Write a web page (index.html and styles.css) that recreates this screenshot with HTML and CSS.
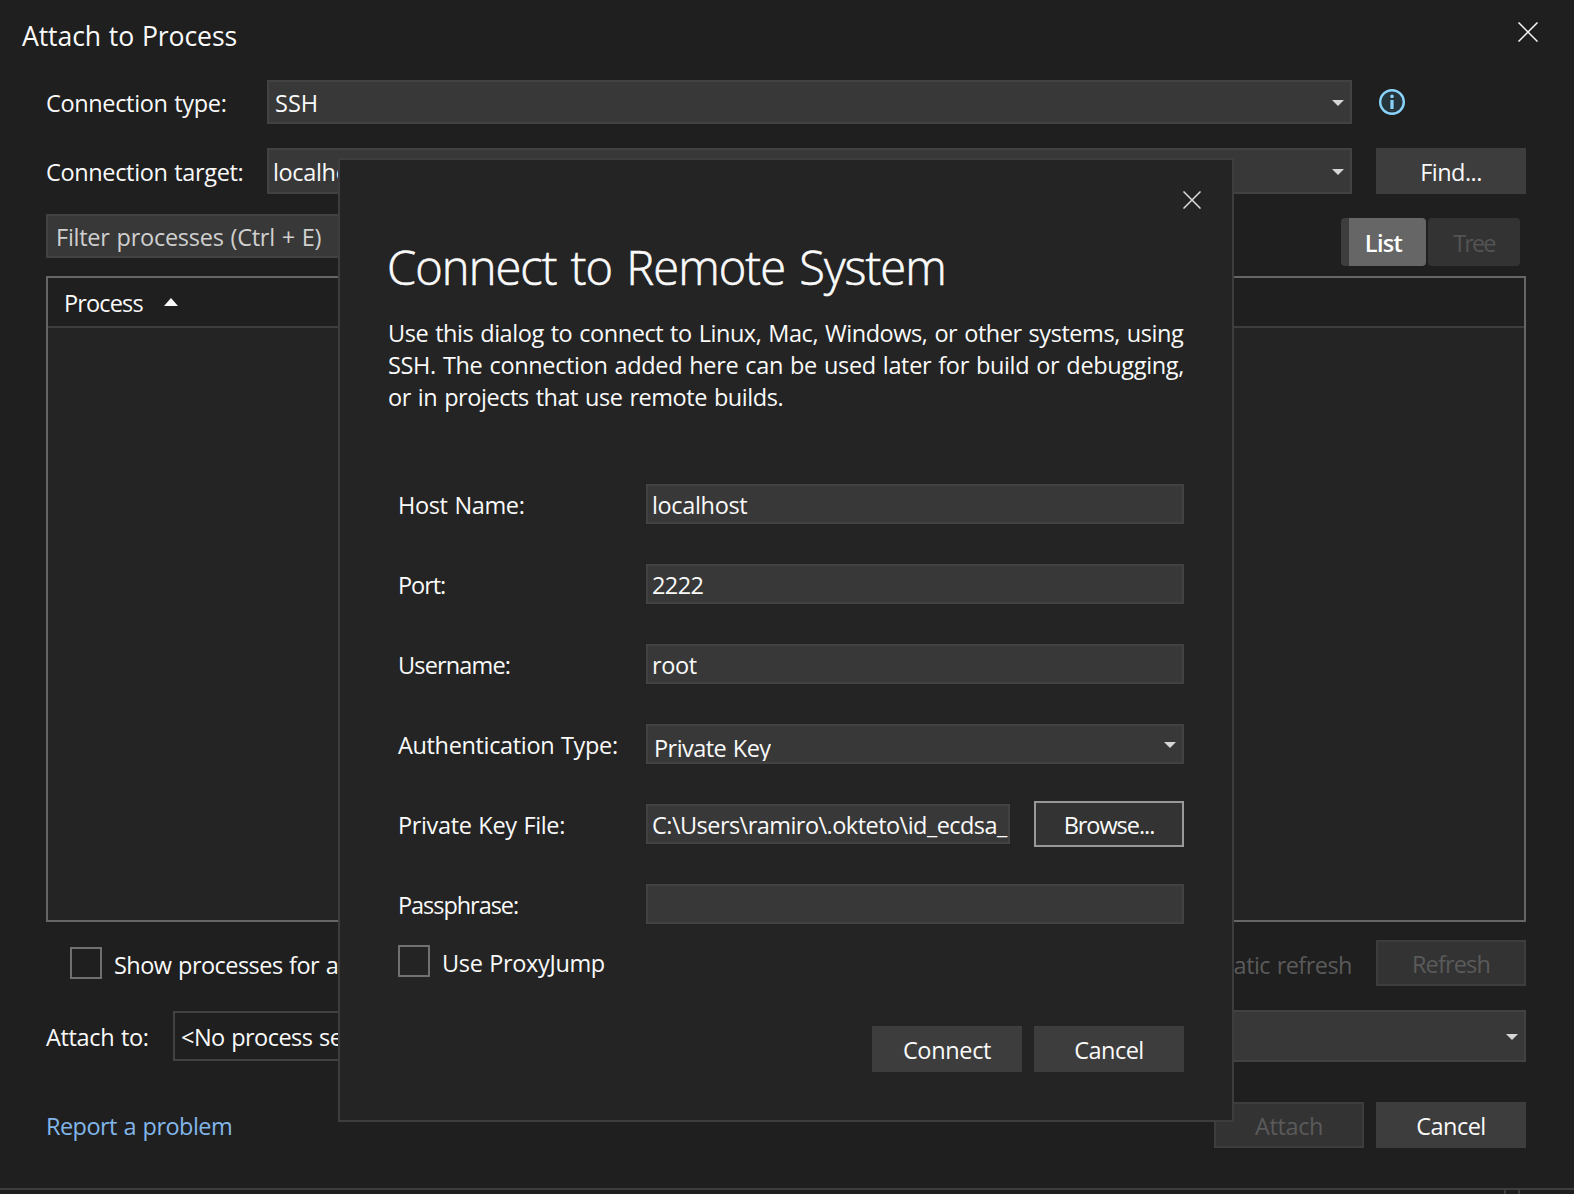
FILE: index.html
```html
<!DOCTYPE html>
<html lang="en">
<head>
<meta charset="utf-8">
<title>Attach to Process</title>
<link rel="stylesheet" href="styles.css">
</head>
<body>
<main class="window">
  <header class="titlebar">
    <h1 class="window-title">Attach to Process</h1>
    <svg class="close" width="20" height="20" viewBox="0 0 20 20"><path d="M.5.5l19 19M19.5.5l-19 19"/></svg>
  </header>

  <div class="row row-type">
    <span class="label side-label">Connection type:</span>
    <div class="field combo"><span class="ls-0">SSH</span><svg class="arrow" width="12" height="6" viewBox="0 0 12 6"><path d="M0 0h12l-6 6z"/></svg></div>
    <svg class="info" width="26" height="26" viewBox="0 0 26 26"><circle cx="13" cy="13" r="11.8"/><path class="dot" d="M13 5.6a1.8 1.8 0 1 1 0 3.6a1.8 1.8 0 1 1 0-3.6M11.4 11h3.2v9h-3.2z"/></svg>
  </div>

  <div class="row row-target">
    <span class="label side-label">Connection target:</span>
    <div class="field combo editable"><span>localhost</span><svg class="arrow" width="12" height="6" viewBox="0 0 12 6"><path d="M0 0h12l-6 6z"/></svg></div>
    <div class="button ls-tight">Find...</div>
  </div>

  <div class="row row-filter">
    <div class="field filter">Filter processes (Ctrl + E)</div>
    <div class="toggle">
      <div class="toggle-item active">List</div>
      <div class="toggle-item off">Tree</div>
    </div>
  </div>

  <section class="table">
    <div class="table-head"><span class="ls-tighter">Process</span><svg width="14" height="8" viewBox="0 0 14 8"><path d="M0 8h14L7 0z"/></svg></div>
  </section>

  <div class="row row-options">
    <div class="check"><i class="box"></i><span class="ls-tight">Show processes for all users</span></div>
    <div class="auto ls-tight">Automatic refresh</div>
    <div class="button disabled ls-tighter">Refresh</div>
  </div>

  <div class="row row-attach">
    <span class="label attach-label">Attach to:</span>
    <div class="selected ls-tight">&lt;No process selected&gt;</div>
    <div class="field combo"><svg class="arrow" width="12" height="6" viewBox="0 0 12 6"><path d="M0 0h12l-6 6z"/></svg></div>
  </div>

  <footer class="row row-footer">
    <a class="link ls-tight">Report a problem</a>
    <div class="button disabled attach">Attach</div>
    <div class="button ls-tight">Cancel</div>
  </footer>
  <div class="edge"><i></i></div>
</main>

<section class="dialog">
  <svg class="close dialog-close" width="18" height="18" viewBox="0 0 18 18"><path d="M.5.5l17 17M17.5.5l-17 17"/></svg>
  <h2 class="dialog-title">Connect to Remote System</h2>
  <p class="intro">Use this dialog to connect to Linux, Mac, Windows, or other systems, using<br><span class="line-two">SSH. The connection added here can be used later for build or debugging,</span><br>or in projects that use remote builds.</p>
  <div class="form">
    <div class="form-row"><span class="label">Host Name:</span><div class="field text">localhost</div></div>
    <div class="form-row"><span class="label ls-tightest">Port:</span><div class="field text ls-number">2222</div></div>
    <div class="form-row"><span class="label ls-tighter">Username:</span><div class="field text">root</div></div>
    <div class="form-row"><span class="label">Authentication Type:</span><div class="field text select"><span class="clip ls-tight">Private Key</span><svg class="arrow" width="12" height="6" viewBox="0 0 12 6"><path d="M0 0h12l-6 6z"/></svg></div></div>
    <div class="form-row"><span class="label">Private Key File:</span><div class="field text path">C:\Users\ramiro\.okteto\id_ecdsa_</div><div class="button focus ls-tightest">Browse...</div></div>
    <div class="form-row"><span class="label ls-tightest">Passphrase:</span><div class="field text"></div></div>
  </div>
  <div class="check proxy"><i class="box"></i><span>Use ProxyJump</span></div>
  <div class="actions">
    <div class="button">Connect</div>
    <div class="button ls-tight">Cancel</div>
  </div>
</section>
</body>
</html>
```

FILE: styles.css
```css
* { box-sizing: border-box; }

body {
  margin: 0;
  width: 1574px;
  height: 1194px;
  overflow: hidden;
  position: relative;
  background: #1f1f1f;
  color: #fafafa;
  font: 23.5px/32px "Open Sans", "Noto Sans", sans-serif;
  letter-spacing: -0.35px;
  word-spacing: 1px;
  white-space: nowrap;
}

h1, h2, p { margin: 0; font-weight: 400; }
svg { display: block; flex: none; }

.ls-0 { letter-spacing: 0; }
.ls-tight { letter-spacing: -0.54px; }
.ls-number { letter-spacing: -0.6px; }
.ls-tighter { letter-spacing: -0.85px; }
.ls-tightest { letter-spacing: -1.05px; }

/* main window */
.window { display: flex; flex-direction: column; height: 1194px; }

.titlebar {
  display: flex;
  justify-content: space-between;
  height: 80px;
  padding: 20px 36px 0 22px;
}
.window-title { font-size: 26.6px; letter-spacing: -0.1px; }
.close { fill: none; stroke: #fafafa; stroke-width: 1.5; }
.titlebar .close { margin-top: 2px; }

.row { display: flex; align-items: center; margin: 0 48px 0 46px; }
.label { padding-top: 2px; }
.side-label { width: 221px; }

.field {
  display: flex;
  align-items: center;
  height: 100%;
  padding-top: 2px;
  background: #383838;
  border: 2px solid #424242;
}
.combo { justify-content: space-between; flex: 1; padding-left: 6px; padding-right: 6px; }
.arrow { fill: #d6d6d6; margin-left: auto; }
.editable { padding-left: 4px; }

.button {
  flex: none;
  width: 150px;
  height: 46px;
  padding-top: 2px;
  line-height: 44px;
  text-align: center;
  background: #3d3d3d;
}
.disabled {
  background: #333333;
  border: 2px solid #3d3d3d;
  color: #5a5a5a;
  line-height: 40px;
}
.focus { background: #333333; border: 2px solid #999999; line-height: 40px; }

.row-type { height: 44px; }
.row-type .combo { margin-right: 27px; }
.info { margin-right: 121px; fill: #26343c; stroke: #88d4fb; stroke-width: 2.4; }
.info .dot { fill: #88d4fb; stroke: none; }

.row-target { height: 46px; margin-top: 24px; }
.row-target .combo { margin-right: 24px; }

.row-filter { height: 52px; margin-top: 20px; align-items: flex-start; justify-content: space-between; }
.filter { width: 900px; height: 44px; padding-left: 8px; color: #d0d0d0; letter-spacing: -0.25px; }
.toggle { display: flex; gap: 2px; margin: 4px 6px 0 0; }
.toggle-item {
  height: 48px;
  padding-top: 2px;
  line-height: 46px;
  text-align: center;
  border-radius: 4px;
}
.active {
  width: 85px;
  padding-right: 8px;
  border-left: 8px solid #3d3d3d;
  background: #666666;
  color: #ffffff;
  font-weight: 600;
  letter-spacing: -0.65px;
}
.off { width: 92px; background: #333333; color: #545454; letter-spacing: -1.9px; }

.table { height: 646px; margin: 10px 48px 0 46px; background: #242424; border: 2px solid #666666; }
.table-head {
  display: flex;
  align-items: center;
  gap: 21px;
  height: 50px;
  padding: 2px 0 0 16px;
  background: #1f1f1f;
  border-bottom: 2px solid #3d3d3d;
}
.table-head svg { fill: #fafafa; margin-bottom: 2px; }

.check { display: flex; align-items: center; gap: 12px; }
.check span { padding-top: 4px; }
.box { width: 32px; height: 32px; border: 2px solid #707070; }

.row-options { height: 46px; margin-top: 18px; }
.row-options .check { padding-left: 24px; }
.auto { margin: 0 24px 0 auto; padding-top: 4px; color: #5a5a5a; }

.row-attach { height: 52px; margin-top: 24px; }
.attach-label { width: 127px; }
.selected { width: 700px; height: 50px; margin-right: 12px; padding: 1px 0 0 6px; line-height: 46px; border: 2px solid #424242; }

.row-footer { height: 46px; margin-top: 40px; }
.link { margin-right: auto; padding-top: 2px; color: #82b6ea; }
.attach { margin-right: 12px; }

.edge { margin-top: 40px; height: 6px; border-top: 2px solid #3d3d3d; }
.edge i { display: block; width: 16px; height: 4px; margin-left: 1504px; border: solid #3d3d3d; border-width: 0 2px; }

/* modal dialog over the window */
.dialog {
  position: absolute;
  left: 338px;
  top: 158px;
  width: 896px;
  height: 964px;
  padding: 0 48px;
  background: #242424;
  border: 2px solid #3d3d3d;
  display: flex;
  flex-direction: column;
}
.dialog-close { align-self: flex-end; margin: 31px -17px 0 0; stroke: #dddddd; }
.dialog-title {
  margin-top: 26px;
  margin-left: -1px;
  height: 64px;
  line-height: 64px;
  font-size: 47px;
  font-weight: 300;
  letter-spacing: -0.95px;
  word-spacing: 3px;
  -webkit-text-stroke: 0.6px #fafafa;
}
.intro { margin-top: 18px; letter-spacing: -0.45px; word-spacing: 1.3px; }
.line-two { letter-spacing: -0.35px; }

.form { display: flex; flex-direction: column; gap: 40px; margin-top: 71px; padding-left: 10px; }
.form-row { display: flex; align-items: center; height: 40px; }
.form-row .label { width: 248px; }
.text { flex: 1; padding-left: 4px; overflow: hidden; }
.select { padding: 0 6px; }
.select .arrow { margin-top: 1px; }
.clip { height: 31px; line-height: 36px; margin-top: 3px; overflow: hidden; }
.path { margin-right: 24px; letter-spacing: -0.54px; }

.proxy { margin: 21px 0 0 10px; height: 32px; }
.actions { display: flex; justify-content: flex-end; gap: 12px; margin-top: 49px; }
```
